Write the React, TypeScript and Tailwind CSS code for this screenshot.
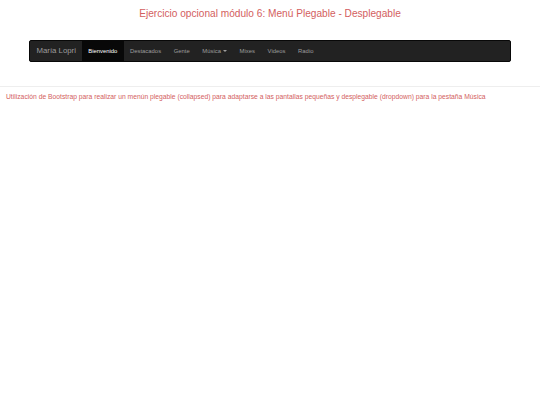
export default function App() {
  const items = ["Destacados", "Gente"];
  return (
    <div className="min-h-screen bg-white font-['Liberation_Sans',Arial,sans-serif]">
      {/* Header */}
      <h1 className="pt-[8px] text-center text-[10.15px] leading-[12px] font-normal text-[#d35e60]">
        Ejercicio opcional módulo 6: Menú Plegable - Desplegable
      </h1>

      {/* Navbar */}
      <div className="px-[29px] pt-[20px]">
        <nav className="flex h-[22px] items-stretch rounded-[2px] border border-[#080808] bg-[#222222] text-[5.9px] text-[#9d9d9d]">
          <span className="flex items-center pl-[6.5px] pr-[6px] text-[7.8px]">María Lopri</span>
          <span className="flex items-center bg-[#080808] px-[6.3px] text-white">Bienvenido</span>
          {items.map((it) => (
            <span key={it} className="flex items-center px-[6.3px]">{it}</span>
          ))}
          <span className="flex items-center gap-[2px] px-[6.3px]">
            Música
            <span className="inline-block h-0 w-0 border-x-[2px] border-t-[2px] border-x-transparent border-t-[#9d9d9d]" />
          </span>
          {["Mixes", "Videos", "Radio"].map((it) => (
            <span key={it} className="flex items-center px-[6.3px]">{it}</span>
          ))}
        </nav>
      </div>

      {/* Description */}
      <div className="mt-[24px] border-t border-[#eeeeee] px-[6px] pt-[5px]">
        <p className="text-[6.75px] leading-[9px] text-[#d35e60]">
          Utilización de Bootstrap para realizar un menún plegable (collapsed) para adaptarse a las pantallas pequeñas y desplegable (dropdown) para la pestaña Música
        </p>
      </div>
    </div>
  );
}
